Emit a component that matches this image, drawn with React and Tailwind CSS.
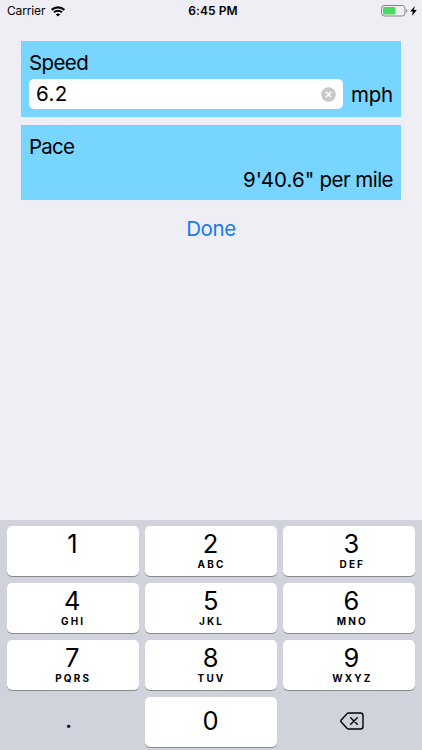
const rows = [
  [["1", ""], ["2", "ABC"], ["3", "DEF"]],
  [["4", "GHI"], ["5", "JKL"], ["6", "MNO"]],
  [["7", "PQRS"], ["8", "TUV"], ["9", "WXYZ"]],
];

function Key({ digit, letters, zero, shifted }) {
  return (
    <button
      className={`flex h-[50px] flex-col items-center rounded-[5px] bg-white shadow-[0_1px_0_#898a8d] ${
        zero ? "pt-[9px]" : "pt-[3px]"
      } ${shifted ? "pl-[5px]" : ""}`}
    >
      <span className="pr-[1px] text-[25.5px] leading-[30px] tracking-[-0.3px]">{digit}</span>
      <span className="pl-[1px] text-[10px] font-bold leading-[10px] tracking-[2.1px]">{letters}</span>
    </button>
  );
}

function StatusBar() {
  return (
    <header className="grid h-[22px] grid-cols-3 items-center pl-[7px] pr-[5px] text-[12px] leading-[22px]">
      <div className="flex items-center gap-[6px]">
        <span className="tracking-[-0.15px]">Carrier</span>
        <svg width="14" height="11" viewBox="0 0 14 11" fill="none" stroke="black">
          <path d="M0.7 3.9C4.2 0.4 9.8 0.4 13.3 3.9" strokeWidth="2.2" />
          <path d="M3 6.4C5.2 4.2 8.8 4.2 11 6.4" strokeWidth="2" />
          <path d="M7 10.6L4.7 8.3C6 7.1 8 7.1 9.3 8.3Z" fill="black" stroke="none" />
        </svg>
      </div>
      <span className="pl-[2px] text-center font-semibold tracking-[0.1px]">6:45 PM</span>
      <div className="flex items-center justify-end gap-[2px]">
        <svg width="27" height="12" viewBox="0 0 27 12">
          <rect x="0.5" y="0.5" width="23.5" height="10.5" rx="2.8" fill="none" stroke="#85858a" />
          <rect x="2" y="2" width="12.5" height="7.5" rx="1" fill="#4cd964" />
          <path d="M25.2 4C26.7 4.6 26.7 7.2 25.2 7.8Z" fill="#85858a" />
        </svg>
        <svg width="7" height="10" viewBox="0 0 7 10">
          <path d="M4.8 0L0.2 5.6H2.9L1.9 10L6.8 4.1H3.9Z" fill="black" />
        </svg>
      </div>
    </header>
  );
}

export default function App() {
  return (
    <div className="flex h-[750px] w-[422px] flex-col overflow-hidden bg-[#efeef4] font-['Inter',sans-serif] text-black">
      <StatusBar />
      <main className="flex flex-1 flex-col px-[21px] pt-[19px] text-[20.5px] leading-[26px] tracking-[-0.3px]">
        <section className="h-[76px] bg-[#78d5ff] px-[8px] pt-[9px]">
          <h2 className="tracking-[-0.6px]">Speed</h2>
          <div className="mt-[3px] flex items-center">
            <div className="flex h-[30px] w-[314px] items-center justify-between rounded-[5px] bg-white pl-[7px] pr-[7px]">
              <span className="tracking-[0.4px]">6.2</span>
              <svg width="15" height="15" viewBox="0 0 15 15">
                <circle cx="7.5" cy="7.5" r="7.3" fill="#c8c8cb" />
                <path d="M4.8 4.8L10.2 10.2M10.2 4.8L4.8 10.2" stroke="white" strokeWidth="1.6" />
              </svg>
            </div>
            <span className="ml-[8px] pt-px">mph</span>
          </div>
        </section>
        <section className="mt-[8.4px] h-[75px] bg-[#78d5ff] px-[8px] pt-[9px]">
          <h2 className="tracking-[-0.8px]">Pace</h2>
          <p className="mt-[7px] text-right">
            <span className="tracking-[0.05px]">9'40.6"</span>
            <span className="tracking-[-0.55px]"> per mile</span>
          </p>
        </section>
        <button className="mt-[16px] self-center text-[#147bf0] tracking-[-0.4px]">Done</button>
      </main>
      <footer className="h-[230.5px] bg-[#d0d3db] px-[6.5px] pt-[6px]">
        <div className="grid grid-cols-3 gap-x-[6px] gap-y-[7.2px]">
          {rows.flat().map(([digit, letters], i) => (
            <Key key={digit} digit={digit} letters={letters} shifted={i % 3 === 2} />
          ))}
          <button className="flex h-[50px] items-center justify-center pb-[5px] pr-[8px] text-[25px]">.</button>
          <Key digit="0" letters="" zero />
          <button className="flex h-[50px] items-center justify-center pl-[5px] pb-[3px]">
            <svg width="24" height="18" viewBox="0 0 24 18" fill="none" stroke="black" strokeWidth="1.4" strokeLinejoin="round">
              <path d="M8.6 1H20.5Q23 1 23 3.5V14.5Q23 17 20.5 17H8.6Q7.8 17 7 16.2L1 9.7Q0.5 9 1 8.3L7 1.8Q7.8 1 8.6 1Z" />
              <path d="M10.7 5.7L17.3 12.3M17.3 5.7L10.7 12.3" strokeLinecap="round" />
            </svg>
          </button>
        </div>
      </footer>
    </div>
  );
}
